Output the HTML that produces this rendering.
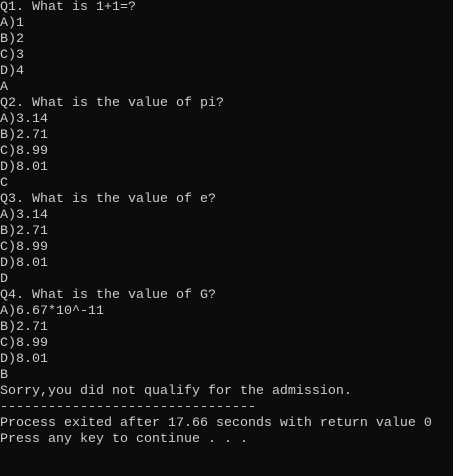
<!DOCTYPE html>
<html><head><meta charset="utf-8"><style>
html,body{margin:0;padding:0;background:#0c0c0c;width:453px;height:476px;overflow:hidden}
pre{margin:0;padding:0 0 0 0;color:#cccccc;font-family:"Liberation Mono",monospace;font-size:13.33px;line-height:16px;letter-spacing:0}
</style></head><body><pre>Q1. What is 1+1=?
A)1
B)2
C)3
D)4
A
Q2. What is the value of pi?
A)3.14
B)2.71
C)8.99
D)8.01
C
Q3. What is the value of e?
A)3.14
B)2.71
C)8.99
D)8.01
D
Q4. What is the value of G?
A)6.67*10^-11
B)2.71
C)8.99
D)8.01
B
Sorry,you did not qualify for the admission.
--------------------------------
Process exited after 17.66 seconds with return value 0
Press any key to continue . . .</pre></body></html>
